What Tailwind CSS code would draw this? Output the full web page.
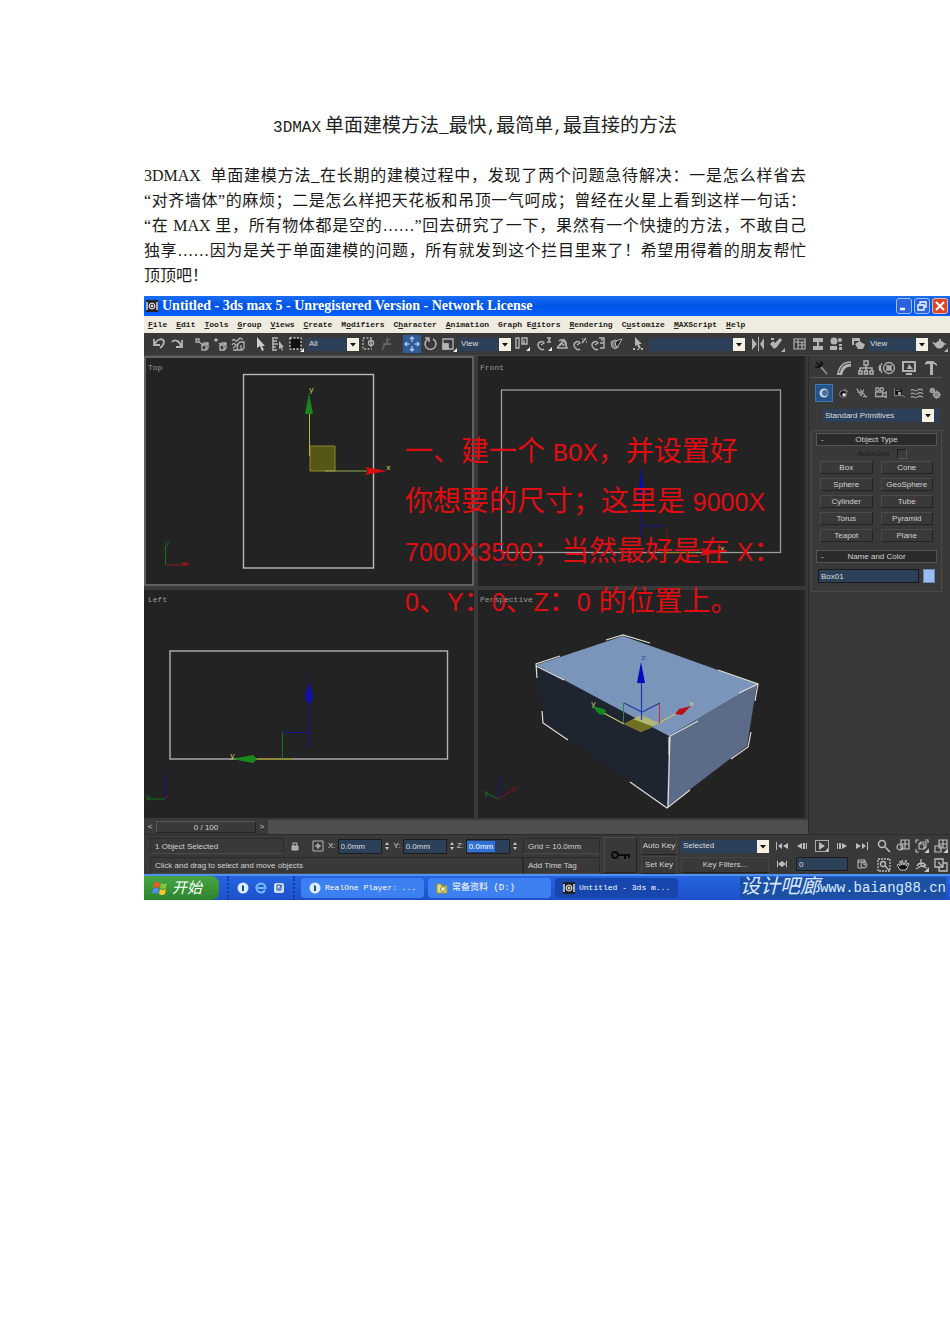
<!DOCTYPE html>
<html lang="zh-CN">
<head>
<meta charset="utf-8">
<title>3DMAX 单面建模方法</title>
<script src="https://cdn.jsdelivr.net/npm/@tailwindcss/browser@4"></script>
</head>
<body class="bg-white text-black">
<svg class="hidden" aria-hidden="true">
  <symbol id="drop" viewBox="0 0 12 13"><path d="M3 5h6l-3 3.500z" fill="#111"/></symbol>
  <symbol id="spin" viewBox="0 0 6 12"><path d="M1 5l2-3 2 3zM1 7h4l-2 3z" fill="#c4c4c4"/></symbol>
  <symbol id="max" viewBox="0 0 12 12"><rect width="12" height="12" fill="#222"/><path d="M1 2v8M11 2v8" stroke="#ddd" stroke-width="1.500"/><circle cx="6" cy="6" r="3" fill="#555" stroke="#eee"/><circle cx="6" cy="6" r="1" fill="#fff"/></symbol>
  <symbol id="real" viewBox="0 0 12 12"><circle cx="6" cy="6" r="5.500" fill="#dcecff"/><path d="M5 3l2 1v5H5z" fill="#1b4fae"/></symbol>
</svg>
<main>
  <article class="mx-36 pt-[113px]">
    <h1 class="text-center text-[19px] leading-7 font-normal text-[#222] font-['Liberation_Mono','Noto_Sans_CJK_SC',monospace] whitespace-nowrap"><span class="text-base">3DMAX</span><span class="ml-1">单面建模方法</span><span class="text-base">_</span>最快<span class="text-base">,</span>最简单<span class="text-base">,</span>最直接的方法</h1>
    <p class="mt-[22px] text-base leading-[25px] whitespace-nowrap text-[#1a1a1a] font-['Liberation_Serif','Noto_Sans_CJK_SC',serif]">
      <span class="block [text-align-last:justify]">3DMAX &nbsp;单面建模方法_在长期的建模过程中，发现了两个问题急待解决：一是怎么样省去</span>
      <span class="block [text-align-last:justify]">“对齐墙体”的麻烦；二是怎么样把天花板和吊顶一气呵成；曾经在火星上看到这样一句话：</span>
      <span class="block [text-align-last:justify]">“在 MAX 里，所有物体都是空的……”回去研究了一下，果然有一个快捷的方法，不敢自己</span>
      <span class="block [text-align-last:justify]">独享……因为是关于单面建模的问题，所有就发到这个拦目里来了！希望用得着的朋友帮忙</span>
      <span class="block">顶顶吧！</span>
    </p>
  </article>

  <section class="mt-2 ml-36 bg-[#393939] text-[#d2d2d2] text-[8px] leading-[12px] font-['Liberation_Sans','Noto_Sans_CJK_SC',sans-serif] overflow-hidden">
    <!-- Title bar -->
    <header class="flex h-5 items-center gap-1 bg-linear-to-b from-[#1b6df2] via-[#0054e6] to-[#0560ff] pl-0.5 pr-0.5 text-white">
      <svg class="size-3"><use href="#max"/></svg>
      <span class="flex-1 whitespace-nowrap text-[14px] leading-5 font-bold font-['Liberation_Serif',serif]">Untitled - 3ds max 5 - Unregistered Version - Network License</span>
      <div class="flex gap-0.5">
        <button aria-label="Minimize" class="size-4 rounded-[3px] border border-[#9dbdf8] bg-[#2c62e0]"><svg viewBox="0 0 14 14"><path d="M3 10h5" stroke="#fff" stroke-width="2.500"/></svg></button>
        <button aria-label="Restore" class="size-4 rounded-[3px] border border-[#9dbdf8] bg-[#2c62e0]"><svg viewBox="0 0 14 14" fill="none" stroke="#fff" stroke-width="1.300"><path d="M5 5V3h6v5H9M3 6h6v5H3z"/></svg></button>
        <button aria-label="Close" class="size-4 rounded-[3px] border border-[#efb5a4] bg-[#d8482a]"><svg viewBox="0 0 14 14"><path d="M3 3l8 8M11 3l-8 8" stroke="#fff" stroke-width="2"/></svg></button>
      </div>
    </header>
    <!-- Menu bar -->
    <nav class="flex h-[17px] items-center gap-[9px] bg-[#efecdf] pl-1 text-[#222] font-['Liberation_Mono',monospace] font-bold whitespace-nowrap">
      <a href="#"><u>F</u>ile</a><a href="#"><u>E</u>dit</a><a href="#"><u>T</u>ools</a><a href="#"><u>G</u>roup</a><a href="#"><u>V</u>iews</a><a href="#"><u>C</u>reate</a><a href="#">M<u>o</u>difiers</a><a href="#">C<u>h</u>aracter</a><a href="#"><u>A</u>nimation</a><a href="#">Graph E<u>d</u>itors</a><a href="#"><u>R</u>endering</a><a href="#">C<u>u</u>stomize</a><a href="#"><u>M</u>AXScript</a><a href="#"><u>H</u>elp</a>
    </nav>
    <!-- Main toolbar -->
    <div class="flex h-[23px] items-center border-b border-[#4a4a4a] pl-1.5 text-[#b4b4b4]">
      <button aria-label="Undo" class="w-[18px]"><svg viewBox="0 0 18 18" fill="none" stroke="currentColor" stroke-width="1.800"><path d="M4 4v6h6M5 9c2-5 7-6 9-3 0 3-1 5-4 7"/></svg></button>
      <button aria-label="Redo" class="w-[18px]"><svg viewBox="0 0 18 18" fill="none" stroke="currentColor" stroke-width="1.800"><path d="M14 5v7H8M13 11c-2-6-7-7-9-4"/></svg></button>
      <button aria-label="Link" class="ml-[7px] w-[18px]"><svg viewBox="0 0 18 18" fill="none" stroke="currentColor" stroke-width="1.300"><path d="M3 4h3v3H3zM6 7l4 3M9 10l2-2h4v5l-2 2H9zM9 10h4v5M13 10l2-2"/></svg></button>
      <button aria-label="Unlink" class="w-[18px]"><svg viewBox="0 0 18 18" fill="none" stroke="currentColor" stroke-width="1.300"><path d="M3 5h4M5 3v4M8 8l2 2M9 10l2-2h4v5l-2 2H9zM9 10h4v5M13 10l2-2"/></svg></button>
      <button aria-label="Bind" class="w-[18px]"><svg viewBox="0 0 18 18" fill="none" stroke="currentColor" stroke-width="1.300"><path d="M3 6c3-5 3 3 6-1s3 0 5-1M3 10c3-5 3 3 6-1M9 9l2-2h4v6l-2 2H8zM4 13l3-2M4 15h4M12 10v4"/></svg></button>
      <button aria-label="Select" class="ml-1 w-[18px]"><svg viewBox="0 0 18 18" fill="#ccc"><path d="M6 2v11l3-2 2 5 2-1-2-4h3z"/></svg></button>
      <button aria-label="Select by name" class="w-[18px]"><svg viewBox="0 0 18 18" fill="none" stroke="currentColor" stroke-width="1.300"><path d="M3 3h6M3 6h5M3 9h6M3 12h4M3 15h5M4 3v12"/><path d="M10 6v8l2-1 1 3 1-1-1-3h2z" fill="currentColor" stroke="none"/></svg></button>
      <button aria-label="Selection region" class="w-[18px]"><svg viewBox="0 0 18 18"><rect x="3" y="3" width="11" height="11" fill="#111" stroke="#c8c8c8" stroke-width="1.300" stroke-dasharray="2 1.500"/><path d="M17 13v4h-4z" fill="#eee"/></svg></button>
      <div class="ml-0.5 flex h-[13px] w-[52px] bg-[#2c4059]"><select aria-label="Selection filter" class="min-w-0 flex-1 appearance-none pl-0.5 text-[#ddd]"><option>All</option></select><svg class="h-[13px] w-3 bg-[#f4f1e2]"><use href="#drop"/></svg></div>
      <button aria-label="Window crossing" class="w-[18px]"><svg viewBox="0 0 18 18" fill="none" stroke="currentColor" stroke-width="1.300"><path d="M13 3H4v11h9" stroke-dasharray="2 1.500"/><circle cx="12" cy="8" r="2.500"/><path d="M12 4v8"/></svg></button>
      <button aria-label="Manipulate" class="w-[18px]"><svg viewBox="0 0 18 18" fill="none" stroke="#6c6c6c" stroke-width="1.300"><path d="M10 3v6M6 9h8M8 9l-3 6M10 6l3-2"/></svg></button>
      <button aria-label="Move" class="ml-2 w-[18px] bg-[#2c5c99]"><svg viewBox="0 0 18 18" fill="none" stroke="#b9d0ec" stroke-width="1.200"><path d="M9 2v5M9 11v5M2 9h5M11 9h5M7 4l2-2 2 2M7 14l2 2 2-2M4 7L2 9l2 2M14 7l2 2-2 2"/></svg></button>
      <button aria-label="Rotate" class="w-[18px]"><svg viewBox="0 0 18 18" fill="none" stroke="currentColor" stroke-width="1.500"><path d="M7 4a5.500 5.500 0 1 0 5 0M4 3h4v4"/></svg></button>
      <button aria-label="Scale" class="w-[18px]"><svg viewBox="0 0 18 18" fill="none" stroke="currentColor" stroke-width="1.300"><path d="M4 4h10v10H4zM4 9h5v5"/><path d="M4 9h5v5H4z" fill="currentColor"/><path d="M18 13v4h-4z" fill="#eee" stroke="none"/></svg></button>
      <div class="ml-0.5 flex h-[13px] w-[52px] bg-[#2c4059]"><select aria-label="Coordinate system" class="min-w-0 flex-1 appearance-none pl-0.5 text-[#ddd]"><option>View</option></select><svg class="h-[13px] w-3 bg-[#f4f1e2]"><use href="#drop"/></svg></div>
      <button aria-label="Pivot" class="ml-0.5 w-[18px]"><svg viewBox="0 0 18 18" fill="none" stroke="currentColor" stroke-width="1.400"><path d="M3 3h3v10H3zM9 3h5v6H9zM11 5v4"/><path d="M17 12v4h-4z" fill="#eee" stroke="none"/></svg></button>
      <button aria-label="Snap" class="ml-1 w-[18px]"><svg viewBox="0 0 18 18" fill="none" stroke="currentColor" stroke-width="1.500"><path d="M9 14c-2 2-6-1-6-4s5-5 6-2l-3 2M12 3h3l-1 2 1 2h-3"/><path d="M17 12v4h-4z" fill="#eee" stroke="none"/></svg></button>
      <button aria-label="Angle snap" class="w-[18px]"><svg viewBox="0 0 18 18" fill="none" stroke="currentColor" stroke-width="1.500"><path d="M4 13h10l-3-8-7 8M6 6c3-3 8 0 7 4M7 11c0-3 3-3 4 0"/></svg></button>
      <button aria-label="Percent snap" class="w-[18px]"><svg viewBox="0 0 18 18" fill="none" stroke="currentColor" stroke-width="1.400"><path d="M9 14c-2 2-6-1-6-4s5-5 6-2l-3 2M11 8l4-5M11 4h1M15 7h1"/></svg></button>
      <button aria-label="Spinner snap" class="w-[18px]"><svg viewBox="0 0 18 18" fill="none" stroke="currentColor" stroke-width="1.400"><path d="M9 14c-2 2-6-1-6-4s5-5 6-2l-3 2M10 3h5v10h-4M11 8h4M12 5h2"/></svg></button>
      <button aria-label="Override" class="w-[18px]"><svg viewBox="0 0 18 18" fill="#777" stroke="currentColor"><path d="M4 7l4-2 4 2-1 5-3 2-3-2z"/><path d="M8 8l2 5 5-9-4 1z" fill="#222"/></svg></button>
      <button aria-label="Edit sets" class="ml-1 w-[18px]"><svg viewBox="0 0 18 18" fill="currentColor"><path d="M6 2v9l2-1 2 4 2-1-2-4h3zM4 13h2v2H4zM8 14h2v1H8zM12 13h2v2h-2z"/></svg></button>
      <div class="ml-0.5 flex h-[13px] min-w-0 flex-1 bg-[#2c4059]"><select aria-label="Named selection" class="min-w-0 flex-1 appearance-none"><option></option></select><svg class="h-[13px] w-3 bg-[#f4f1e2]"><use href="#drop"/></svg></div>
      <button aria-label="Mirror" class="ml-1 w-[18px]"><svg viewBox="0 0 18 18" fill="currentColor"><path d="M3 3l5 6-5 6zM15 3l-4 6 4 6zM9 2h1v14H9z"/></svg></button>
      <button aria-label="Align" class="w-[18px]"><svg viewBox="0 0 18 18" fill="currentColor"><path d="M3 9l3-3 2 2 5-5 2 2-5 7-3 2zM4 3h3v2H4zM18 13v4h-4z"/></svg></button>
      <button aria-label="Track view" class="ml-1.5 w-[18px]"><svg viewBox="0 0 18 18" fill="none" stroke="currentColor" stroke-width="1.200"><path d="M3 4h11v10H3zM3 7h11M7 4v10M11 7v7M7 10h7"/></svg></button>
      <button aria-label="Schematic view" class="w-[18px]"><svg viewBox="0 0 18 18" fill="currentColor"><path d="M4 3h10v4H4zM4 11h10v4H4zM8 7h2v4H8z"/></svg></button>
      <button aria-label="Material editor" class="w-[18px]"><svg viewBox="0 0 18 18" fill="currentColor"><circle cx="7" cy="6" r="3.500"/><circle cx="13" cy="5" r="2"/><path d="M3 11h7v4H3zM12 9h3v2h-3zM12 12h3v3h-3z"/></svg></button>
      <button aria-label="Render scene" class="ml-1 w-[18px]"><svg viewBox="0 0 18 18" fill="currentColor"><path d="M3 3h8v3H3zM3 6h2v4H3zM6 9l3-2 2-1 2 2 3 1-2 5H9z"/></svg></button>
      <div class="ml-px flex h-[13px] w-[60px] bg-[#2c4059]"><select aria-label="Render type" class="min-w-0 flex-1 appearance-none pl-0.5 text-[#ddd]"><option>View</option></select><svg class="h-[13px] w-3 bg-[#f4f1e2]"><use href="#drop"/></svg></div>
      <button aria-label="Quick render" class="mx-0.5 w-[18px]"><svg viewBox="0 0 18 18" fill="currentColor"><path d="M2 7l4 1c2-3 6-3 8 0l3 1-3 1c-1 4-6 5-9 1zM9 4h2v2H9zM18 13v4h-4z"/></svg></button>
    </div>

    <!-- Viewports and command panel -->
    <div class="flex">
      <div class="min-w-0 flex-1">
        <div class="relative grid grid-cols-[330fr_328fr] gap-1 bg-[#393939] pr-0.5 pb-0.5 font-['Liberation_Mono',monospace] text-[#9b9b9b]">
          <figure class="relative bg-[#232323]">
            <figcaption class="absolute top-1.5 left-1">Top</figcaption>
            <svg class="block w-full" viewBox="144 356 330 230" fill="none">
              <rect x="145" y="357" width="328" height="228" stroke="#757575" stroke-width="1.500"/>
              <rect x="243.500" y="374.500" width="130" height="193.500" stroke="#bababa" stroke-width="1.400"/>
              <path d="M310 446h25v25h-25z" fill="#565716" stroke="#8c8b22"/>
              <path d="M309.500 456v-44" stroke="#b9b04f"/><path d="M325 471h42" stroke="#90a552" stroke-width="1.200"/>
              <path d="M309 393l4 21h-8z" fill="#16861d"/><path d="M387 471l-22-4 3 4-3 4z" fill="#d90c10"/>
              <text x="309" y="392" font-size="8" fill="#d8d84a">y</text><text x="386" y="470" font-size="8" fill="#d8d84a">x</text>
              <path d="M165.500 565v-20" stroke="#15701b"/><path d="M166 565h22" stroke="#9b151a"/><path d="M182 562l8 1-6 3" fill="#9b151a"/><text x="165" y="545" font-size="8" fill="#15701b">y</text>
            </svg>
          </figure>
          <figure class="relative bg-[#232323]">
            <figcaption class="absolute top-1.5 left-0.5">Front</figcaption>
            <svg class="block w-full" viewBox="478 356 328 230" preserveAspectRatio="none" fill="none">
              <path d="M805 356v230" stroke="#2d2d2d" stroke-width="2"/>
              <rect x="501.500" y="390" width="279" height="162.500" stroke="#9c9c9c" stroke-width="1.300"/>
              <path d="M641.500 468v70M642 526h24" stroke="#12128a"/><path d="M641.500 470l3 24h-6z" fill="#0c0cae"/>
              <path d="M667 527v24M500 565h19" stroke="#7a1216"/><path d="M660 552.500h36" stroke="#8d8c22"/><path d="M722 552l-22-4 3 4-3 4z" fill="#d90c10"/><text x="720" y="551" font-size="8" fill="#d8d84a">x</text><path d="M499 565v-20" stroke="#12128a"/>
            </svg>
          </figure>
          <figure class="relative bg-[#232323]">
            <figcaption class="absolute top-1 left-1">Left</figcaption>
            <svg class="block w-full" viewBox="144 590 330 228" fill="none">
              <rect x="170" y="651" width="277.500" height="108" stroke="#b2b2b2" stroke-width="1.400"/>
              <path d="M309 747v-46M283 732.500h26" stroke="#15158c" stroke-width="1.200"/><path d="M309 682l4 14-2 7h-4l-2-7z" fill="#0e0eb2"/>
              <path d="M282.500 733v26" stroke="#15731b"/><path d="M250 759h42" stroke="#8b881f" stroke-width="1.400"/><path d="M232 759l21-4 4 4-4 4z" fill="#1b881e"/>
              <text x="230" y="758" font-size="8" fill="#d8d84a">y</text><text x="307" y="679" font-size="7" fill="#1c1c64">z</text>
              <path d="M165 798v-20" stroke="#15158c"/><path d="M146 799h19" stroke="#15731b"/><path d="M165 798l4-2" stroke="#8c1215"/><text x="146" y="799" font-size="8" fill="#15731b">y</text><text x="166" y="778" font-size="7" fill="#1c1c64">z</text>
            </svg>
          </figure>
          <figure class="relative bg-[#232323]">
            <figcaption class="absolute top-1 left-0.5">Perspective</figcaption>
            <svg class="block w-full" viewBox="478 590 328 228" preserveAspectRatio="none" fill="none">
              <path d="M805 590v228" stroke="#2d2d2d" stroke-width="2"/>
              <path d="M536 665l133 71-2 71-123-84z" fill="#1e2430"/>
              <path d="M536 665l87-29 134 48-88 52z" fill="#7b94ba"/>
              <path d="M669 736l88-52-10 62-80 61z" fill="#5b6b88"/>
              <path d="M606 640l17-5 27 8M718 670l40 14-3 17M560 656l-24 8 1 14M536 666l28 14M542 711l1 12 25 17M630 782l37 26 23-18M668 807l2-71 28-15M731 759l17-12 3-15M758 684l-19 9M669 737v18" stroke="#dededa" stroke-width="1.200"/>
              <path d="M624 724l17-9 18 8-18 9z" fill="#b2b878"/><path d="M624 724l9-5 21 8-13 5z" fill="#716f22"/>
              <path d="M624 724l-24-13M659 723l18-10" stroke="#c5c36c" stroke-width="1.300"/>
              <path d="M623.500 723v-20" stroke="#228a40"/><path d="M659.500 723v-20" stroke="#d42b31"/><path d="M624 703l18 9 18-9M641.500 720v-40" stroke="#1c3ea8" stroke-width="1.200"/>
              <path d="M641 662l4 21h-8z" fill="#0808be"/><path d="M592 706l12 3 2 2-2 4-5-1z" fill="#118c1c"/><path d="M691 706l-12 3-4 5 7 1z" fill="#bb1014"/>
              <text x="641" y="660" font-size="8" fill="#2450b8">z</text><text x="591" y="706" font-size="8" fill="#d8d87a">y</text><text x="689" y="706" font-size="8" fill="#d8d8a0">x</text>
              <path d="M498 799l2-22" stroke="#17178a" stroke-width="1.300"/><path d="M498 799l-12-6" stroke="#15731b"/><path d="M498 799l17-10" stroke="#8c1215"/><text x="484" y="795" font-size="8" fill="#15731b">y</text><text x="512" y="791" font-size="7" fill="#8c1215">x</text>
            </svg>
          </figure>
          <p class="absolute top-[71px] left-[261px] whitespace-nowrap text-[28px] leading-[50px] text-[#e00d12] font-['Liberation_Sans','Noto_Sans_CJK_SC',sans-serif] [&>span]:block [&>span]:h-[50px] [&_b]:font-normal [&_b]:leading-6 [&_b]:text-[25px]"><span>一、建一个 <b class="font-['Liberation_Mono',monospace]">BOX</b>，并设置好</span><span>你想要的尺寸；这里是 <b>9000X</b></span><span><b>7000X3500</b>；当然最好是在 <b>X</b>：</span><span><b>0</b>、<b>Y</b>：<b>0</b>、<b>Z</b>：<b>0</b> 的位置上。</span></p>
        </div>
        <!-- Time slider -->
        <div class="flex h-3.5 items-center">
          <button aria-label="Previous frame" class="w-3">&lt;</button>
          <div class="h-3 w-[100px] border border-t-[#555] border-l-[#555] border-r-[#222] border-b-[#222] text-center leading-[11px]">0 / 100</div>
          <button aria-label="Next frame" class="w-3">&gt;</button>
          <div class="h-3.5 flex-1 bg-[#4e4e4e]"></div>
        </div>
      </div>

      <aside class="w-[142px] border-l border-[#2b2b2b] pr-2 pl-0.5">
        <div class="flex h-[22px] items-end justify-between border-b border-[#555] px-0.5 text-[#b0b0b0]">
          <button aria-label="Create"><svg class="size-[18px]" viewBox="0 0 18 18" stroke="#111" stroke-width="1.500"><path d="M3 3l5 5M8 2v5M2 8h5M10 4L8 7"/><path d="M8 8l6 7" stroke="#999"/></svg></button>
          <button aria-label="Modify"><svg class="size-[18px]" viewBox="0 0 18 18" fill="none" stroke="currentColor"><path d="M3 15C4 8 8 3 16 3" stroke-width="1.500"/><path d="M6 15C7 9 10 6 16 6" stroke-width="3"/><path d="M2 15h5" stroke-width="2"/></svg></button>
          <button aria-label="Hierarchy"><svg class="size-[18px]" viewBox="0 0 18 18" fill="none" stroke="currentColor" stroke-width="1.500"><path d="M7 2h4v4H7zM2 12h3v3H2zM7.500 12h3v3h-3zM13 12h3v3h-3zM9 6v6M3 12V9h12v3"/></svg></button>
          <button aria-label="Motion"><svg class="size-[18px]" viewBox="0 0 18 18" fill="none" stroke="currentColor" stroke-width="1.300"><circle cx="11" cy="9" r="5.500"/><circle cx="11" cy="9" r="2"/><path d="M8 6l6 6M14 6l-6 6M4 4c-2 3-2 7 0 10M2 6c-1 2-1 4 0 6"/></svg></button>
          <button aria-label="Display"><svg class="size-[18px]" viewBox="0 0 18 18" fill="none" stroke="currentColor" stroke-width="2"><path d="M3 3h12v9H3zM6 15h6"/><path d="M7 10l2-5 4 5z" fill="currentColor" stroke="none"/></svg></button>
          <button aria-label="Utilities"><svg class="size-[18px]" viewBox="0 0 18 18" fill="currentColor"><path d="M3 4l2-2h6l4 3v2l-3-2h-1v11H8V5H5L3 6z"/></svg></button>
        </div>
        <div class="mt-1.5 flex items-center justify-between pl-1 text-[#a5a5a5]">
          <button aria-label="Geometry" class="border border-[#3d78ba] bg-[#245489]"><svg class="size-4" viewBox="0 0 16 16"><circle cx="8" cy="8" r="4.500" fill="#c8d4e2"/><circle cx="9" cy="8" r="3" fill="#4c6f9b"/></svg></button>
          <button aria-label="Shapes"><svg class="size-3.5" viewBox="0 0 16 16"><circle cx="7" cy="9" r="4" fill="#111" stroke="#999"/><circle cx="8" cy="10" r="2" fill="#ddd"/><path d="M8 3l5 4" stroke="#999"/></svg></button>
          <button aria-label="Lights"><svg class="size-3.5" viewBox="0 0 16 16" fill="none" stroke="currentColor" stroke-width="1.300"><path d="M2 3l5 8 3-7M6 4l7 9M9 12h5M3 7h5"/></svg></button>
          <button aria-label="Cameras"><svg class="size-3.5" viewBox="0 0 16 16" fill="none" stroke="currentColor" stroke-width="1.500"><circle cx="5" cy="4" r="2"/><circle cx="10" cy="4" r="2"/><path d="M3 7h8v5H3zM11 9l4-2v6l-4-2"/></svg></button>
          <button aria-label="Helpers"><svg class="size-3.5" viewBox="0 0 16 16"><path d="M3 4h8v7H3z" fill="#111"/><path d="M3 3v8h9M5 5h4M12 11l3 2" stroke="#999" fill="none"/><path d="M7 7h3v3H7z" fill="#bbb"/></svg></button>
          <button aria-label="Space warps"><svg class="size-3.5" viewBox="0 0 16 16" fill="none" stroke="currentColor" stroke-width="1.300"><path d="M1 5c3-3 4 2 7 0s4-2 7 0M1 9c3-3 4 2 7 0s4-2 7 0M1 13c3-3 4 2 7 0s4-2 7 0"/></svg></button>
          <button aria-label="Systems"><svg class="size-3.5" viewBox="0 0 16 16" fill="none" stroke="currentColor" stroke-width="2"><circle cx="5" cy="5" r="2"/><circle cx="10" cy="10" r="3"/><path d="M10 5v10M5 10h10M2 5h6" stroke-width="1"/></svg></button>
        </div>
        <div class="mt-[7px] mr-0.5 ml-3 flex h-[13px] bg-[#2c4059]"><select aria-label="Category" class="min-w-0 flex-1 appearance-none pl-0.5 text-[#ddd]"><option>Standard Primitives</option></select><svg class="mr-1.5 h-[13px] w-3 bg-[#f4f1e2]"><use href="#drop"/></svg></div>
        <div class="mt-2 border border-[#4a4a4a] px-1 pt-0.5 pb-2">
          <div class="relative h-[13px] border border-[#555] bg-[#2b2b2b] text-center leading-[11px]"><span class="absolute left-1">-</span>Object Type</div>
          <label class="flex h-[15px] items-center justify-center gap-2 pl-3 text-[#1f1f1f]">AutoGrid<input type="checkbox" disabled class="size-2.5 appearance-none border border-[#1d1d1d] border-r-[#555] border-b-[#555]"></label>
          <div class="grid grid-cols-2 gap-x-2 gap-y-1 px-1 [&>button]:h-[13px] [&>button]:border [&>button]:border-t-[#4b4b4b] [&>button]:border-l-[#4b4b4b] [&>button]:border-r-[#222] [&>button]:border-b-[#222] [&>button]:leading-[11px]">
            <button>Box</button><button>Cone</button><button>Sphere</button><button>GeoSphere</button><button>Cylinder</button><button>Tube</button><button>Torus</button><button>Pyramid</button><button>Teapot</button><button>Plane</button>
          </div>
          <div class="relative mt-2 h-[13px] border border-[#555] bg-[#2b2b2b] text-center leading-[11px]"><span class="absolute left-1">-</span>Name and Color</div>
          <div class="mt-1.5 flex gap-1 px-0.5">
            <input aria-label="Object name" value="Box01" class="h-3.5 min-w-0 flex-1 border border-[#1c1c1c] bg-[#2c4059] pl-0.5 text-[#ddd]">
            <button aria-label="Object color" class="h-3.5 w-3 border border-[#6b86b4] bg-[#9bbcf3]"></button>
          </div>
        </div>
      </aside>
    </div>

    <!-- Status bar -->
    <div class="flex h-10 gap-1 border-t border-[#2b2b2b] pt-0.5 pl-1.5 whitespace-nowrap">
      <div class="w-[450px]">
        <div class="flex h-[18px] items-center">
          <div class="h-4 w-[134px] border border-[#2a2a2a] border-b-[#4a4a4a] pl-1 leading-[15px]">1 Object Selected</div>
          <button aria-label="Lock selection" class="ml-1.5"><svg class="size-2.5" viewBox="0 0 10 10" fill="none" stroke="#bbb"><path d="M3 5V2h4v3"/><path d="M2 5h6v4H2z" fill="#aaa"/></svg></button>
          <button aria-label="Absolute mode" class="ml-3"><svg class="size-3" viewBox="0 0 12 12" fill="none" stroke="#b5b5b5"><path d="M1 1h10v10H1zM3 6h6M6 3v6"/><circle cx="6" cy="6" r="1.500"/></svg></button>
          <label class="ml-1 flex items-center gap-0.5">X:<input value="0.0mm" class="h-[15px] w-11 border border-[#1c1c1c] bg-[#2c4059] pl-0.5 text-[#ddd]"></label><svg class="mx-0.5 h-3 w-1.5"><use href="#spin"/></svg>
          <label class="ml-0.5 flex items-center gap-0.5">Y:<input value="0.0mm" class="h-[15px] w-11 border border-[#1c1c1c] bg-[#2c4059] pl-0.5 text-[#ddd]"></label><svg class="mx-0.5 h-3 w-1.5"><use href="#spin"/></svg>
          <label class="flex items-center gap-0.5">Z:<span class="flex h-[15px] w-11 items-center border border-[#1c1c1c] bg-[#2c4059]"><input value="0.0mm" class="w-7 bg-[#2f72d5] pl-0.5 leading-[11px] text-white"></span></label><svg class="mx-0.5 h-3 w-1.5"><use href="#spin"/></svg>
          <div class="ml-auto h-4 w-[77px] border border-[#2a2a2a] border-b-[#4a4a4a] pl-1 leading-[15px]">Grid = 10.0mm</div>
        </div>
        <div class="mt-0.5 flex h-[17px]">
          <div class="flex-1 border border-[#2a2a2a] border-b-[#4a4a4a] pl-1 leading-4">Click and drag to select and move objects</div>
          <div class="w-[77px] border border-[#2a2a2a] border-b-[#4a4a4a] pl-1 leading-4">Add Time Tag</div>
        </div>
      </div>
      <button aria-label="Set keys" class="h-9 w-[33px] border border-[#4c4c4c] border-r-[#222] border-b-[#222]"><svg class="mx-auto h-3 w-5" viewBox="0 0 20 12" fill="none" stroke="#0b0b0b" stroke-width="2"><circle cx="4" cy="6" r="3"/><path d="M7 6h12M14 6v4M18 6v3"/></svg></button>
      <div class="grid w-9 grid-rows-2 gap-px text-center"><button class="border border-[#464646] border-b-[#222]">Auto Key</button><button class="border border-[#464646] border-b-[#222]">Set Key</button></div>
      <div class="grid w-[88px] grid-rows-2 items-center gap-px">
        <div class="flex h-[13px] bg-[#2c4059]"><select aria-label="Key set" class="min-w-0 flex-1 appearance-none pl-0.5 text-[#ddd]"><option>Selected</option></select><svg class="h-[13px] w-3 bg-[#f4f1e2]"><use href="#drop"/></svg></div>
        <button class="h-4 border border-[#464646] border-b-[#222]">Key Filters...</button>
      </div>
      <div class="w-[98px] text-[#bdbdbd]">
        <div class="flex h-[18px] items-center justify-between px-0.5">
          <button aria-label="Go to start"><svg class="h-3 w-3.5" viewBox="0 0 14 12" fill="currentColor"><path d="M1 2h1v8H1zM7 3v6L3 6zM13 3v6L8 6z"/></svg></button>
          <button aria-label="Step back"><svg class="h-3 w-3.5" viewBox="0 0 14 12" fill="currentColor"><path d="M7 3v6L2 6zM8 3h2v6H8zM11 3h1v6h-1z"/></svg></button>
          <button aria-label="Play" class="border border-[#aaa]"><svg class="h-2.5 w-3" viewBox="0 0 12 10" fill="currentColor"><path d="M3 1v8l6-4zM12 7v3H9z"/></svg></button>
          <button aria-label="Step forward"><svg class="h-3 w-3.5" viewBox="0 0 14 12" fill="currentColor"><path d="M7 3v6l5-3zM4 3h2v6H4zM2 3h1v6H2z"/></svg></button>
          <button aria-label="Go to end"><svg class="h-3 w-3.5" viewBox="0 0 14 12" fill="currentColor"><path d="M12 2h1v8h-1zM7 3v6l4-3zM1 3v6l5-3z"/></svg></button>
        </div>
        <div class="flex h-[18px] items-center justify-between px-0.5">
          <button aria-label="Key mode"><svg class="h-3 w-3.5" viewBox="0 0 14 12" fill="currentColor"><path d="M2 3h1v6H2zM7 3v6L3 6zM7 3v6l4-3zM11 3h1v6h-1z"/></svg></button>
          <input aria-label="Current frame" value="0" class="h-3.5 w-[52px] border border-[#1c1c1c] bg-[#2c4059] pl-0.5 text-[#ddd]">
          <button aria-label="Time configuration"><svg class="h-3 w-3.5" viewBox="0 0 14 12" fill="none" stroke="currentColor"><path d="M3 2h7v2H3zM3 4v6h4"/><circle cx="9" cy="7" r="3"/><path d="M9 5v2h2"/></svg></button>
        </div>
      </div>
      <div class="grid flex-1 grid-cols-4 grid-rows-2 items-center justify-items-center text-[#bdbdbd] [&_svg]:size-3.5">
        <button aria-label="Zoom"><svg viewBox="0 0 14 14" fill="none" stroke="currentColor" stroke-width="1.600"><circle cx="5" cy="5" r="3.500"/><path d="M8 8l5 5"/></svg></button>
        <button aria-label="Zoom all"><svg viewBox="0 0 14 14" fill="none" stroke="currentColor" stroke-width="1.200"><path d="M5 1h8v9H5zM9 1v9M5 5h8"/><circle cx="4" cy="8" r="3"/></svg></button>
        <button aria-label="Zoom extents"><svg viewBox="0 0 14 14" fill="none" stroke="currentColor" stroke-width="1.200"><path d="M1 4V1h3M10 1h3v3M1 10v3h3M4 5h5v5H4zM4 5l2-2h5v5l-2 2"/><path d="M14 10v4h-4z" fill="#eee"/></svg></button>
        <button aria-label="Zoom extents all"><svg viewBox="0 0 14 14" fill="none" stroke="currentColor" stroke-width="1.200"><path d="M5 1h8v8H5zM9 1v8M5 5h8M1 7h6v6H1z"/><path d="M14 10v4h-4z" fill="#eee"/></svg></button>
        <button aria-label="Zoom region"><svg viewBox="0 0 14 14" fill="none" stroke="currentColor" stroke-width="1.300"><rect x="1" y="1" width="12" height="12" stroke-dasharray="2 1"/><circle cx="6" cy="6" r="2.500"/><path d="M8 8l4 4"/></svg></button>
        <button aria-label="Pan"><svg viewBox="0 0 14 14" fill="#111" stroke="currentColor"><path d="M4 12L1 7l2-1 1 2V3l2 4V2l2 5 2-5v6l2-3 1 1-3 6z"/></svg></button>
        <button aria-label="Arc rotate"><svg viewBox="0 0 14 14" fill="none" stroke="currentColor" stroke-width="1.300"><path d="M6 1v7l-5 3M6 8l6 2M2 8c2-4 7-4 9 0M6 8h4"/><path d="M14 10v4h-4z" fill="#eee"/></svg></button>
        <button aria-label="Maximize viewport"><svg viewBox="0 0 14 14" fill="none" stroke="currentColor" stroke-width="1.300"><path d="M1 1h8v8H1zM9 5h4v8H5V9M4 4l5 5M6 9h3V6"/></svg></button>
      </div>
    </div>

    <!-- Taskbar -->
    <footer class="flex h-[26px] items-stretch border-t-2 border-[#4d91f3] bg-linear-to-b from-[#2565e0] to-[#1e50cb] text-white whitespace-nowrap">
      <button class="flex w-[75px] items-center gap-1 rounded-r-lg bg-linear-to-b from-[#48a645] to-[#2c8330] pl-2 text-[15px] italic">
        <svg class="size-4" viewBox="0 0 16 16"><path d="M2 3q3-2 6 0L7 8q-3-2-6 0z" fill="#ef5a2b"/><path d="M9 3q3 2 6 0l-1 5q-3 2-6 0z" fill="#84c73e"/><path d="M1 9q3-2 6 0l-1 5q-3-2-6 0z" fill="#4a8df0"/><path d="M8 9q3 2 6 0l-1 5q-3 2-6 0z" fill="#f6c72f"/></svg>开始
      </button>
      <div class="ml-2 flex items-center gap-1.5 border-l-2 border-dotted border-[#143c9d] pl-2">
        <button aria-label="RealOne"><svg class="size-3"><use href="#real"/></svg></button>
        <button aria-label="Internet Explorer"><svg class="size-3" viewBox="0 0 12 12" fill="none" stroke="#78baff" stroke-width="2"><path d="M10 8a4.500 4.500 0 1 1 .5-2H3"/></svg></button>
        <button aria-label="Show desktop"><svg class="size-3" viewBox="0 0 12 12"><rect x="1" y="1" width="10" height="10" rx="2" fill="#cfe0f7"/><path d="M4 3h4v5H4zM5 8l4-5" fill="none" stroke="#2b55a8"/></svg></button>
      </div>
      <div class="ml-2 flex min-w-0 flex-1 gap-1 border-l-2 border-dotted border-[#143c9d] pl-1.5 font-['Liberation_Mono','Noto_Sans_CJK_SC',monospace]">
        <button class="my-0.5 flex w-[123px] items-center gap-1 rounded-sm bg-[#3d80f1] pl-2"><svg class="size-3"><use href="#real"/></svg>RealOne Player: ...</button>
        <button class="my-0.5 flex w-[123px] items-center gap-1 rounded-sm bg-[#3d80f1] pl-2 text-[9px]"><svg class="size-3" viewBox="0 0 12 12"><path d="M1 2h4l1 2h5v7H1z" fill="#f3d873" stroke="#a78f31"/><circle cx="7" cy="7" r="2.500" fill="#e7f1c6" stroke="#6c8d4a"/></svg>常备资料 (D:)</button>
        <button class="my-0.5 flex w-[123px] items-center gap-1 rounded-sm bg-[#1747ae] pl-2"><svg class="size-3"><use href="#max"/></svg>Untitled - 3ds m...</button>
      </div>
      <div class="my-px mr-1 flex items-center bg-[#1c50a5] text-[#dbe9ff] font-['Liberation_Mono','Noto_Sans_CJK_SC',monospace]"><span class="text-xl leading-5 italic">设计吧廊</span><span class="text-[14px]">www.baiang88.cn</span></div>
    </footer>
  </section>
</main>
</body>
</html>
